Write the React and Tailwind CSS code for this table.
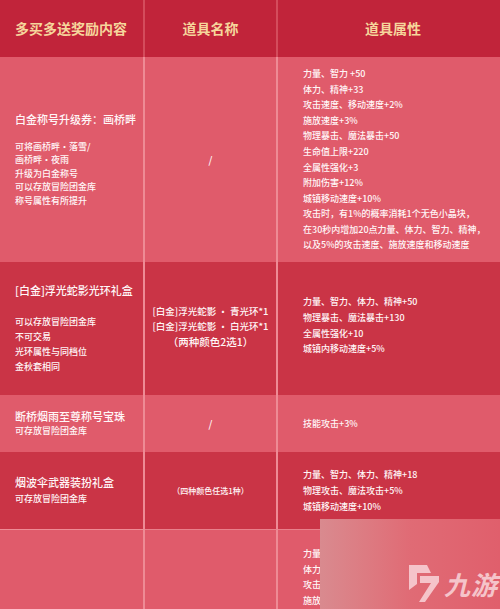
import React from "react";

const Line = ({ children }) => <div className="whitespace-nowrap">{children}</div>;

function Logo() {
  return (
    <div className="absolute right-0 bottom-0 w-[180px] h-[90px] bg-gradient-to-r from-[#d98a8f] via-[#e06b75] to-[#e05f6c] flex items-end justify-end pr-[2px] pb-[6px]">
      <div className="flex items-center gap-[3px]">
        <svg width="32" height="39" viewBox="0 0 32 39" className="mr-[1px]">
          <path d="M1 1 L19 1 L23 9 L9 9 L9 20 L1 26 Z" fill="#f5c4ca" />
          <path d="M12 12 L31 12 L31 18 L17 38 L11 38 L23 19 L12 19 Z" fill="#f5c4ca" />
        </svg>
        <span className="text-[26px] leading-none font-bold italic text-[#f5c4ca] tracking-[1px] font-['Noto_Sans_CJK_SC',sans-serif]">
          九游
        </span>
      </div>
    </div>
  );
}

export default function App() {
  const light = "bg-[#e05b6b]";
  const dark = "bg-[#ca3446]";
  const c1 = "border-r-[2px] border-[#ee8b95] pl-[15px] flex flex-col justify-center";
  const c2 = "border-r-[2px] border-[#ee8b95] flex flex-col items-center justify-center";
  const c3 = "pl-[25px] flex flex-col justify-center";
  return (
    <div className="relative w-[500px] h-[609px] overflow-hidden text-[#fff6f7] font-medium font-['Noto_Sans_CJK_SC',sans-serif] bg-[#e05b6b]">
      <div className="grid grid-cols-[145px_133px_1fr]">
        {/* header */}
        <div className="h-[57px] bg-[#c1243a] border-r-[2px] border-[#d44c5c] pl-[15px] flex items-center text-[14px] font-bold text-[#f6d69c]">
          多买多送奖励内容
        </div>
        <div className="h-[57px] bg-[#c1243a] border-r-[2px] border-[#d44c5c] flex items-center justify-center text-[14px] font-bold text-[#f6d69c]">
          道具名称
        </div>
        <div className="h-[57px] bg-[#c1243a] flex items-center justify-center pl-[8px] text-[14px] font-bold text-[#f6d69c]">
          道具属性
        </div>

        {/* row 1 */}
        <div className={`${light} h-[205px] ${c1}`}>
          <div className="text-[11px] leading-[14px] mb-[14px] whitespace-nowrap">白金称号升级券：画桥畔</div>
          <div className="text-[9px] leading-[13.5px]">
            <Line>可将画桥畔·落雪/</Line>
            <Line>画桥畔·夜雨</Line>
            <Line>升级为白金称号</Line>
            <Line>可以存放冒险团金库</Line>
            <Line>称号属性有所提升</Line>
          </div>
        </div>
        <div className={`${light} h-[205px] ${c2} text-[10px]`}>/</div>
        <div className={`${light} h-[205px] ${c3} text-[9px] leading-[15.6px]`}>
          <Line>力量、智力 +50</Line>
          <Line>体力、精神+33</Line>
          <Line>攻击速度、移动速度+2%</Line>
          <Line>施放速度+3%</Line>
          <Line>物理暴击、魔法暴击+50</Line>
          <Line>生命值上限+220</Line>
          <Line>全属性强化+3</Line>
          <Line>附加伤害+12%</Line>
          <Line>城镇移动速度+10%</Line>
          <Line>攻击时，有1%的概率消耗1个无色小晶块，</Line>
          <Line>在30秒内增加20点力量、体力、智力、精神，</Line>
          <Line>以及5%的攻击速度、施放速度和移动速度</Line>
        </div>

        {/* row 2 */}
        <div className={`${dark} h-[133px] ${c1}`}>
          <div className="text-[11px] leading-[14px] mb-[17px] whitespace-nowrap">[白金]浮光蛇影光环礼盒</div>
          <div className="text-[9px] leading-[15px]">
            <Line>可以存放冒险团金库</Line>
            <Line>不可交易</Line>
            <Line>光环属性与同档位</Line>
            <Line>金秋套相同</Line>
          </div>
        </div>
        <div className={`${dark} h-[133px] ${c2} text-[9.5px] leading-[15px] pb-[4px]`}>
          <Line>[白金]浮光蛇影 · 青光环*1</Line>
          <Line>[白金]浮光蛇影 · 白光环*1</Line>
          <div className="text-[10.5px] whitespace-nowrap">（两种颜色2选1）</div>
        </div>
        <div className={`${dark} h-[133px] ${c3} text-[9px] leading-[15.6px] pb-[6px]`}>
          <Line>力量、智力、体力、精神+50</Line>
          <Line>物理暴击、魔法暴击+130</Line>
          <Line>全属性强化+10</Line>
          <Line>城镇内移动速度+5%</Line>
        </div>

        {/* row 3 */}
        <div className={`${light} h-[57px] ${c1}`}>
          <div className="text-[11px] leading-[15px] whitespace-nowrap">断桥烟雨至尊称号宝珠</div>
          <div className="text-[9px] leading-[14px]">可存放冒险团金库</div>
        </div>
        <div className={`${light} h-[57px] ${c2} text-[10px]`}>/</div>
        <div className={`${light} h-[57px] ${c3} text-[9px]`}>
          <Line>技能攻击+3%</Line>
        </div>

        {/* row 4 */}
        <div className={`${dark} h-[77px] ${c1}`}>
          <div className="text-[11px] leading-[15px] mb-[2px] whitespace-nowrap">烟波伞武器装扮礼盒</div>
          <div className="text-[9px] leading-[14px]">可存放冒险团金库</div>
        </div>
        <div className={`${dark} h-[77px] ${c2} text-[8px]`}>
          <Line>（四种颜色任选1种）</Line>
        </div>
        <div className={`${dark} h-[77px] ${c3} text-[9px] leading-[16px]`}>
          <Line>力量、智力、体力、精神+18</Line>
          <Line>物理攻击、魔法攻击+5%</Line>
          <Line>城镇移动速度+10%</Line>
        </div>

        {/* row 5 */}
        <div className={`${light} h-[80px] border-t border-[#e9808b] ${c1}`}></div>
        <div className={`${light} h-[80px] border-t border-[#e9808b] border-r-[2px] border-r-[#ee8b95]`}></div>
        <div className={`${light} h-[80px] border-t border-[#e9808b] pl-[25px] pt-[16px] text-[9px] leading-[15.6px]`}>
          <Line>力量、智力 +50</Line>
          <Line>体力、精神+33</Line>
          <Line>攻击速度、移动速度+2%</Line>
          <Line>施放速度+3%</Line>
        </div>
      </div>
      <Logo />
    </div>
  );
}
